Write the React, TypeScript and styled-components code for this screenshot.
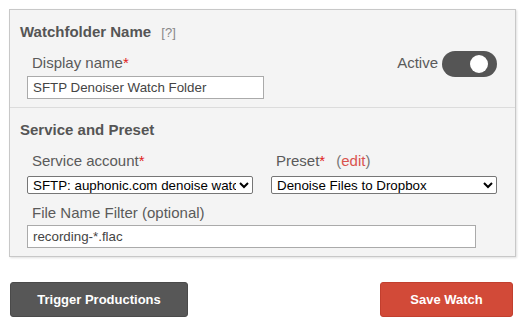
import React, { useState } from "react";
import styled, { createGlobalStyle } from "styled-components";

const GlobalStyle = createGlobalStyle`
  body {
    margin: 0;
    background: #fff;
    font-family: "Liberation Sans", Arial, sans-serif;
  }
`;

const App: React.FC = () => {
  const [active, setActive] = useState(true);

  return (
    <>
      <GlobalStyle />
      <Page>
        <Panel>
          <Section>
            <Heading>
              Watchfolder Name <Help>[?]</Help>
            </Heading>
            <NameRow>
              <Field>
                <Label>
                  Display name<Req>*</Req>
                </Label>
                <TextInput width={237} defaultValue="SFTP Denoiser Watch Folder" />
              </Field>
              <ActiveBox>
                <ActiveLabel>Active</ActiveLabel>
                <Switch on={active} onClick={() => setActive(!active)}>
                  <Knob />
                </Switch>
              </ActiveBox>
            </NameRow>
          </Section>
          <Section divider>
            <Heading>Service and Preset</Heading>
            <Columns>
              <Label>
                Service account<Req>*</Req>
              </Label>
              <Label>
                Preset<Req>*</Req>
                <EditLink>
                  (<span>edit</span>)
                </EditLink>
              </Label>
              <Select defaultValue="sftp">
                <option value="sftp">SFTP: auphonic.com denoise watchfolder</option>
              </Select>
              <Select defaultValue="dropbox">
                <option value="dropbox">Denoise Files to Dropbox</option>
              </Select>
            </Columns>
            <FilterField>
              <Label>File Name Filter (optional)</Label>
              <TextInput width={449} defaultValue="recording-*.flac" />
            </FilterField>
          </Section>
        </Panel>
        <Actions>
          <Button width={178}>Trigger Productions</Button>
          <Button width={133} primary>
            Save Watch
          </Button>
        </Actions>
      </Page>
    </>
  );
};

export default App;

const Page = styled.div`
  padding: 9px 0 0 9px;
  width: 507px;
`;

const Panel = styled.div`
  border: 1px solid #c8c8c8;
  background: #f4f4f4;
  box-shadow: 1px 1px 2px rgba(0, 0, 0, 0.12);
`;

const Section = styled.div<{ divider?: boolean }>`
  padding: 13px 10px 8px 10px;
  border-top: ${(p) => (p.divider ? "1px solid #dcdcdc" : "none")};
`;

const Heading = styled.div`
  font-size: 15px;
  line-height: 18px;
  font-weight: bold;
  color: #555;
`;

const Help = styled.span`
  font-size: 13px;
  font-weight: normal;
  color: #888;
  margin-left: 6px;
`;

const NameRow = styled.div`
  display: flex;
  justify-content: space-between;
  align-items: flex-start;
  margin-top: 12px;
`;

const Field = styled.div`
  padding-left: 7px;
  display: flex;
  flex-direction: column;
`;

const Label = styled.div`
  font-size: 15px;
  line-height: 18px;
  color: #5a5a5a;
  padding-left: 5px;
`;

const Req = styled.span`
  color: #e02020;
`;

const EditLink = styled.span`
  margin-left: 11px;
  color: #777;
  span {
    color: #d9534f;
  }
`;

const TextInput = styled.input<{ width: number }>`
  box-sizing: border-box;
  width: ${(p) => p.width}px;
  height: 23px;
  margin-top: 4px;
  border: 1px solid #aaa;
  background: #fff;
  padding: 0 5px;
  font-family: "Liberation Sans", Arial, sans-serif;
  font-size: 13.33px;
  color: #444;
  outline: none;
`;

const ActiveBox = styled.div`
  display: flex;
  align-items: center;
  gap: 4px;
  margin-top: -3px;
  margin-right: 8px;
`;

const ActiveLabel = styled.span`
  font-size: 15px;
  color: #5a5a5a;
  margin-top: -3px;
`;

const Switch = styled.div<{ on: boolean }>`
  box-sizing: border-box;
  width: 55px;
  height: 26px;
  border-radius: 13px;
  background: ${(p) => (p.on ? "#555" : "#bbb")};
  display: flex;
  align-items: center;
  justify-content: ${(p) => (p.on ? "flex-end" : "flex-start")};
  padding: 0 9px;
  cursor: pointer;
`;

const Knob = styled.div`
  width: 18px;
  height: 18px;
  border-radius: 50%;
  background: #fff;
`;

const Columns = styled.div`
  display: grid;
  grid-template-columns: 226px 226px;
  column-gap: 18px;
  row-gap: 6px;
  padding-left: 7px;
  margin-top: 13px;
`;

const Select = styled.select`
  box-sizing: border-box;
  width: 226px;
  height: 18px;
  border: 1px solid #767676;
  border-radius: 2px;
  background: #fff;
  font-family: "Liberation Sans", Arial, sans-serif;
  font-size: 13.33px;
  color: #000;
  padding: 0 0 0 1px;
`;

const FilterField = styled(Field)`
  margin-top: 10px;
  input {
    margin-top: 3px;
  }
`;

const Actions = styled.div`
  display: flex;
  justify-content: space-between;
  margin-top: 25px;
  padding-right: 3px;
  padding-left: 1px;
`;

const Button = styled.button<{ width: number; primary?: boolean }>`
  width: ${(p) => p.width}px;
  height: 35px;
  border: 1px solid ${(p) => (p.primary ? "#c23f2e" : "#4a4a4a")};
  border-radius: 3px;
  background: ${(p) => (p.primary ? "#d24a38" : "#575757")};
  color: #fff;
  font-family: "Liberation Sans", Arial, sans-serif;
  font-size: 13px;
  font-weight: bold;
  cursor: pointer;
`;
